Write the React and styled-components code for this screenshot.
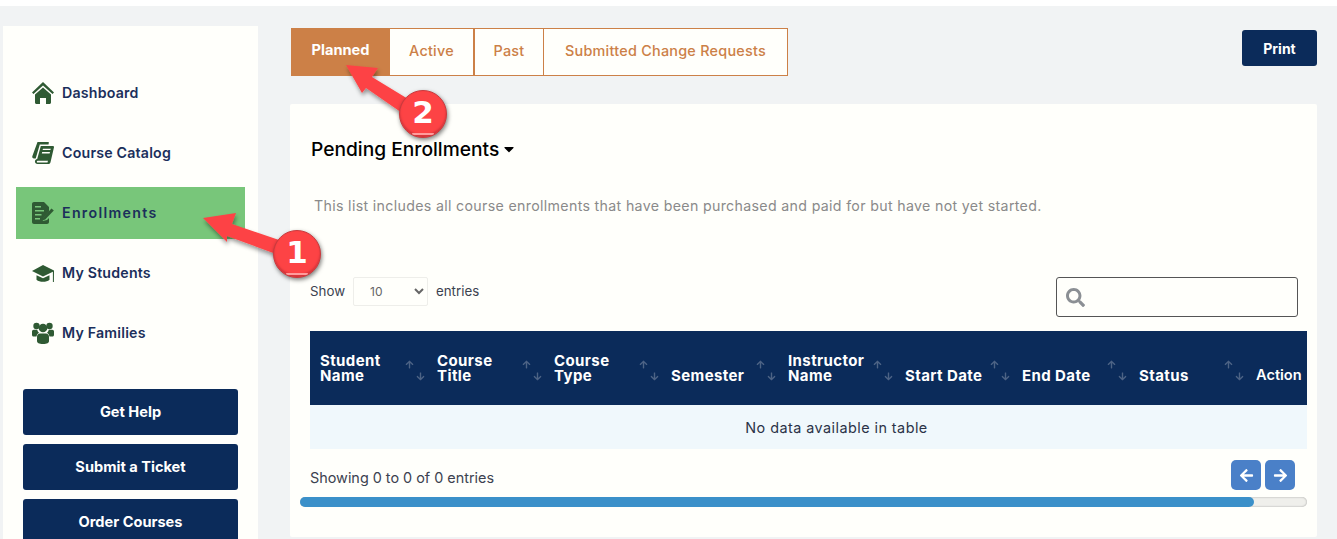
import React from "react";
import styled, { createGlobalStyle } from "styled-components";
import {
  FaSearch,
  FaArrowLeft,
  FaArrowRight,
  FaCaretDown,
  FaArrowUp,
  FaArrowDown,
} from "react-icons/fa";

const navy = "#0b2b5a";
const leaf = "#2f5a33";
const copper = "#cc8047";
const paper = "#fffffb";
const font = '"Inter", "Open Sans", sans-serif';

const GlobalStyle = createGlobalStyle`
  html, body {
    margin: 0;
    height: 539px;
    overflow: hidden;
    background: #fff;
    font-family: ${font};
  }
  * { box-sizing: border-box; }
`;

const Page = styled.div`
  position: relative;
  height: 539px;
  padding-top: 6px;
  overflow: hidden;
`;

const Shell = styled.div`
  display: flex;
  height: 533px;
  background: #f1f3f4;
`;

const Sidebar = styled.aside`
  flex: none;
  width: 255px;
  height: 540px;
  margin: 20px 0 0 3px;
  padding-top: 37px;
  background: ${paper};
`;

const NavList = styled.nav`
  display: flex;
  flex-direction: column;
`;

const NavItem = styled.a`
  display: flex;
  align-items: center;
  height: 52px;
  margin: 4px 13px;
  padding: 0 0 1px 16px;
  gap: 8px;
  font-size: 14.2px;
  font-weight: 600;
  color: #1b2f5b;
  letter-spacing: ${(p) => (p.$active ? "1.3px" : "0.2px")};
  background: ${(p) => (p.$active ? "#78c67a" : "transparent")};
  svg {
    flex: none;
    width: 22px;
    height: 22px;
    margin-top: 1px;
    color: ${leaf};
  }
`;

const HelpList = styled.div`
  display: flex;
  flex-direction: column;
  gap: 9px;
  margin: 26px 20px 0;
`;

const NavyButton = styled.button`
  display: block;
  height: ${(p) => p.$h || 46}px;
  width: ${(p) => (p.$w ? `${p.$w}px` : "100%")};
  padding: 0;
  border: 0;
  border-radius: 3px;
  background: ${navy};
  color: #fff;
  font-family: ${font};
  font-size: ${(p) => p.$size || 14.6}px;
  font-weight: 700;
`;

const Main = styled.main`
  flex: none;
  width: 1027px;
  margin: 22px 0 0 32px;
`;

const TopBar = styled.div`
  display: flex;
  justify-content: space-between;
  align-items: flex-start;
  padding-left: 1px;
  button { margin-top: 2px; }
`;

const Tabs = styled.div`
  display: flex;
  height: 48px;
`;

const Tab = styled.a`
  display: flex;
  align-items: center;
  justify-content: center;
  width: ${(p) => p.$w}px;
  font-size: ${(p) => (p.$active ? 14.6 : 14.4)}px;
  font-weight: ${(p) => (p.$active ? 700 : 500)};
  letter-spacing: ${(p) => (p.$active ? 0 : 0.25)}px;
  padding-bottom: ${(p) => (p.$active ? 4 : 3)}px;
  color: ${(p) => (p.$active ? "#fff" : copper)};
  background: ${(p) => (p.$active ? copper : paper)};
  border: 1px solid ${copper};
  border-left-width: ${(p) => (p.$joined ? 0 : 1)}px;
`;

const Card = styled.section`
  height: 433px;
  margin-top: 28px;
  padding: 33px 10px 0 20px;
  background: ${paper};
  border-radius: 2px;
`;

const Heading = styled.h2`
  display: flex;
  align-items: center;
  gap: 4px;
  margin: 0;
  padding-left: 1px;
  height: 24px;
  font-size: 19.2px;
  font-weight: 500;
  color: #000;
  svg { width: 12px; height: 16px; }
`;

const Description = styled.p`
  margin: 35px 0 0 4px;
  font-size: 14.2px;
  letter-spacing: 0.33px;
  line-height: 20px;
  color: #8a8a8a;
`;

const Controls = styled.div`
  display: flex;
  justify-content: space-between;
  align-items: flex-start;
  margin: 61px 9px 0 0;
  height: 40px;
`;

const LengthLabel = styled.label`
  display: flex;
  align-items: center;
  gap: 8px;
  height: 29px;
  padding-bottom: 1px;
  font-size: 13.3px;
  color: #3c4250;
`;

const LengthSelect = styled.select`
  width: 75px;
  height: 29px;
  margin-bottom: -1px;
  padding-left: 12px;
  border: 1px solid #eeeeea;
  border-radius: 2px;
  background: ${paper};
  color: #666;
  font-family: ${font};
  font-size: 12px;
`;

const SearchBox = styled.div`
  display: flex;
  align-items: center;
  width: 242px;
  height: 40px;
  padding-left: 9px;
  border: 1px solid #555;
  border-radius: 3px;
  svg { width: 19px; height: 19px; color: #8b8f94; }
`;

const DataTable = styled.table`
  display: block;
  width: 997px;
  margin-top: 14px;
  border-collapse: collapse;
  overflow: hidden;
`;

const TableHead = styled.thead`
  display: block;
  width: 1053px;
`;

const TableBody = styled.tbody`
  display: block;
  width: 1053px;
`;

const HeadRow = styled.tr`
  display: grid;
  grid-template-columns: repeat(9, 117px);
  height: 74px;
  background: ${navy};
`;

const HeadCell = styled.th`
  position: relative;
  display: flex;
  align-items: flex-end;
  padding: 0 0 22px 10px;
  color: #fff;
  font-size: ${(p) => (p.$plain ? 14.6 : 15)}px;
  font-weight: ${(p) => (p.$plain ? 600 : 700)};
  letter-spacing: ${(p) => (p.$plain ? 0 : 0.4)}px;
  line-height: 15px;
  text-align: left;
  white-space: nowrap;
`;

const SortUp = styled(FaArrowUp)`
  position: absolute;
  left: 95px;
  top: 29px;
  width: 9px;
  height: 9px;
  color: #4d6385;
`;

const SortDown = styled(FaArrowDown)`
  position: absolute;
  left: 106px;
  top: 41px;
  width: 9px;
  height: 9px;
  color: #4d6385;
`;

const EmptyRow = styled.tr`
  display: block;
  height: 44px;
  background: #f0f8fc;
`;

const EmptyCell = styled.td`
  display: flex;
  align-items: center;
  justify-content: center;
  height: 44px;
  font-size: 14.4px;
  letter-spacing: 0.45px;
  color: #2b3348;
`;

const Footer = styled.div`
  display: flex;
  justify-content: space-between;
  align-items: center;
  height: 30px;
  margin: 11px 12px 0 0;
`;

const Info = styled.div`
  padding-top: 4px;
  font-size: 14.4px;
  color: #3c4250;
`;

const Pager = styled.div`
  display: flex;
  gap: 4px;
`;

const PageButton = styled.button`
  display: flex;
  align-items: center;
  justify-content: center;
  width: 30px;
  height: 30px;
  padding: 0;
  border: 0;
  border-radius: 5px;
  background: #4a80c8;
  color: #fff;
  svg { width: 15px; height: 15px; }
`;

const ScrollTrack = styled.div`
  height: 10px;
  margin: 7px 0 0 -10px;
  border-radius: 5px;
  background: #efefeb;
  box-shadow: inset 0 0 2px #999;
`;

const ScrollThumb = styled.div`
  height: 10px;
  border-radius: 5px;
  background: #3b90c9;
`;

const Badge = styled.div`
  position: absolute;
  left: ${(p) => p.$x - 24}px;
  top: ${(p) => p.$y - 24}px;
  display: flex;
  align-items: center;
  justify-content: center;
  width: 48px;
  height: 48px;
  padding-bottom: 4px;
  border: 1px solid #c93a3e;
  border-radius: 50%;
  background: #fd4345;
  color: #fff;
  font-family: "DejaVu Sans", sans-serif;
  font-size: 31px;
  font-weight: 700;
  line-height: 1;
  box-shadow: inset 0 -2px 2px #d0343a, 1px 2px 4px rgba(0, 0, 0, 0.5);
  &::after {
    content: "";
    position: absolute;
    left: 12px;
    bottom: 2px;
    width: 22px;
    height: 2px;
    border-radius: 0 0 10px 10px;
    background: #ff9c9c;
  }
`;

const ArrowLayer = styled.svg`
  position: absolute;
  left: 0;
  top: 0;
  pointer-events: none;
`;

const Home = () => (
  <svg viewBox="0 0 22 22" fill="currentColor">
    <path d="M11 0l11 10.500-1.500 1.500L11 3.500 1.500 12 0 10.500z" />
    <path d="M3 12.500l8-7 8 7v8c0 .8-.7 1.500-1.500 1.500H14v-6H8v6H4.500C3.700 22 3 21.300 3 20.500z" />
  </svg>
);

const Books = () => (
  <svg viewBox="0 0 22 22" fill="currentColor">
    <path d="M5.500 0H16c.7 0 1 .5.8 1.100l-.3 1.400H7.800L3.700 16.500H2C.6 16.500 0 15.500.3 14.300z" />
    <path
      fillRule="evenodd"
      d="M8.800 4H21c.8 0 1.200.6 1 1.300l-3.500 14.900c-.3 1-1 1.800-2 1.800H5.500C3.700 22 2.700 20.500 3 19c.2-1 1-2 2.200-2zM11 6.700l-.4 1.400h7.800l.4-1.400zM10.200 10l-.4 1.400h7.800l.4-1.400zM5.800 18.800c-.6 0-1 .4-1 .9s.4.9 1 .9h9.700c.1-.6.2-1.200.5-1.800z"
    />
  </svg>
);

const Form = () => (
  <svg viewBox="0 0 22 22" fill="currentColor">
    <path
      fillRule="evenodd"
      d="M2 0h10l5 5v4.500l-5.500 6-.8 3.500 4.300-1 2-2V20c0 1.100-.9 2-2 2H2c-1.100 0-2-.9-2-2V2C0 .9.900 0 2 0zM3 4v1.500h6V4zM3 8v1.500h9V8zM3 12v1.500h6.500V12zM3 16v1.500h5V16z"
    />
    <path d="M19.500 6.500l2.300 2.100-8.600 9-3 .8.800-3z" />
  </svg>
);

const Cap = () => (
  <svg viewBox="0 0 22 22" fill="currentColor">
    <path d="M11 3L22 8.500v1L21.900 20h-1V9.800L11 14.500 0 9z" />
    <path d="M4.500 13.300l6.500 3 6.500-3v4.500c-1.500 1.400-4 2-6.500 2s-5-.6-6.500-2z" />
  </svg>
);

const Family = () => (
  <svg viewBox="0 0 22 22" fill="currentColor">
    <circle cx="4.500" cy="4" r="3.200" />
    <circle cx="17.500" cy="4" r="3.200" />
    <circle cx="11" cy="6" r="4.300" />
    <path d="M0 9.500c0-1 .8-1.800 1.800-1.800h3.400c.3 1.200.9 2.200 1.800 3-1.400.8-2.300 2.200-2.500 3.800H1.500C.7 14.500 0 13.800 0 13z" />
    <path d="M22 9.500c0-1-.8-1.800-1.800-1.800h-3.400c-.3 1.200-.9 2.200-1.800 3 1.400.8 2.300 2.200 2.500 3.800h3c.8 0 1.500-.7 1.500-1.500z" />
    <path d="M8 11.500h6c1.800 0 3 1.500 3 3.200v4.300c0 1.700-1.800 3-6 3s-6-1.300-6-3v-4.300c0-1.700 1.200-3.200 3-3.200z" />
  </svg>
);

const navItems = [
  { label: "Dashboard", Icon: Home },
  { label: "Course Catalog", Icon: Books },
  { label: "Enrollments", Icon: Form, active: true },
  { label: "My Students", Icon: Cap },
  { label: "My Families", Icon: Family },
];

const tabs = [
  { label: "Planned", w: 99, active: true },
  { label: "Active", w: 84, joined: true },
  { label: "Past", w: 70 },
  { label: "Submitted Change Requests", w: 244, joined: true },
];

const columns = [
  ["Student", "Name"],
  ["Course", "Title"],
  ["Course", "Type"],
  ["Semester"],
  ["Instructor", "Name"],
  ["Start Date"],
  ["End Date"],
  ["Status"],
  ["Action"],
];

export default function App() {
  return (
    <Page>
      <GlobalStyle />
      <Shell>
        <Sidebar>
          <NavList>
            {navItems.map(({ label, Icon, active }) => (
              <NavItem key={label} $active={active}>
                <Icon />
                {label}
              </NavItem>
            ))}
          </NavList>
          <HelpList>
            <NavyButton>Get Help</NavyButton>
            <NavyButton>Submit a Ticket</NavyButton>
            <NavyButton>Order Courses</NavyButton>
          </HelpList>
        </Sidebar>
        <Main>
          <TopBar>
            <Tabs>
              {tabs.map((t) => (
                <Tab key={t.label} $w={t.w} $active={t.active} $joined={t.joined}>
                  {t.label}
                </Tab>
              ))}
            </Tabs>
            <NavyButton $w={75} $h={36} $size={14}>Print</NavyButton>
          </TopBar>
          <Card>
            <Heading>
              Pending Enrollments <FaCaretDown />
            </Heading>
            <Description>
              This list includes all course enrollments that have been purchased and paid for but have not yet started.
            </Description>
            <Controls>
              <LengthLabel>
                Show
                <LengthSelect defaultValue="10">
                  <option>10</option>
                  <option>25</option>
                  <option>50</option>
                </LengthSelect>
                entries
              </LengthLabel>
              <SearchBox>
                <FaSearch />
              </SearchBox>
            </Controls>
            <DataTable>
              <TableHead>
                <HeadRow>
                  {columns.map((lines) => (
                    <HeadCell key={lines.join(" ")} $plain={lines[0] === "Action"}>
                      <span>
                        {lines.map((l) => (
                          <div key={l}>{l}</div>
                        ))}
                      </span>
                      <SortUp />
                      <SortDown />
                    </HeadCell>
                  ))}
                </HeadRow>
              </TableHead>
              <TableBody>
                <EmptyRow>
                  <EmptyCell>No data available in table</EmptyCell>
                </EmptyRow>
              </TableBody>
            </DataTable>
            <Footer>
              <Info>Showing 0 to 0 of 0 entries</Info>
              <Pager>
                <PageButton><FaArrowLeft /></PageButton>
                <PageButton><FaArrowRight /></PageButton>
              </Pager>
            </Footer>
            <ScrollTrack>
              <ScrollThumb style={{ width: "94.7%" }} />
            </ScrollTrack>
          </Card>
        </Main>
      </Shell>

      <ArrowLayer width="1337" height="539" viewBox="0 0 1337 539">
        <defs>
          <filter id="arrowShadow" x="-20%" y="-20%" width="140%" height="140%">
            <feDropShadow dx="1" dy="3" stdDeviation="2" floodColor="#000" floodOpacity="0.4" />
          </filter>
        </defs>
        <path
          d="M203 218 L236 213 L232 224 L282 241 L276 254 L227 236 L227 242 Z"
          fill="#fd4345"
          filter="url(#arrowShadow)"
        />
        <path
          d="M346 65 L378 68 L372 77 L413 102 L405 115 L366 88 L362 93 Z"
          fill="#fd4345"
          filter="url(#arrowShadow)"
        />
      </ArrowLayer>
      <Badge $x={297} $y={254}>1</Badge>
      <Badge $x={423} $y={114}>2</Badge>
    </Page>
  );
}
